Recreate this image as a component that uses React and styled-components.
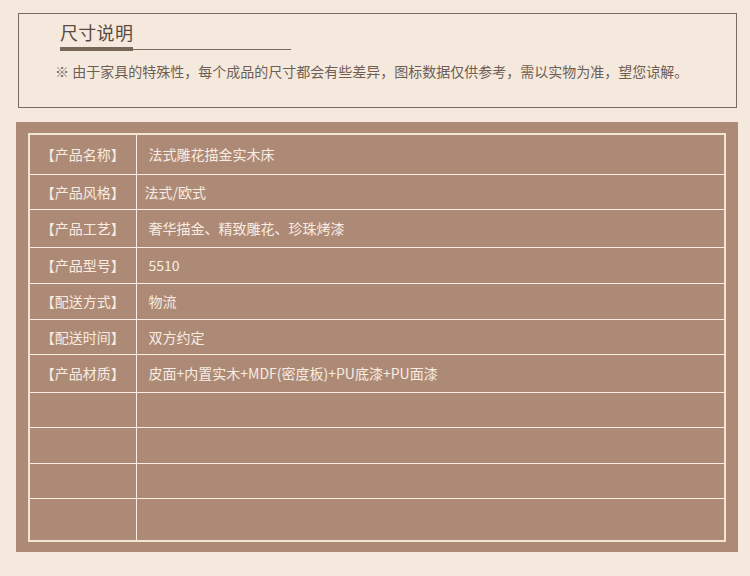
import React from 'react'
import styled, { createGlobalStyle } from 'styled-components'

const GlobalStyle = createGlobalStyle`
  html, body {
    margin: 0;
    padding: 0;
    background: #f5e9de;
  }
  body {
    font-family: "Noto Sans CJK SC", "Noto Sans", sans-serif;
  }
`

const rows = [
  { label: '【产品名称】', value: '法式雕花描金实木床', h: 40 },
  { label: '【产品风格】', value: '法式/欧式', h: 35, tight: true },
  { label: '【产品工艺】', value: '奢华描金、精致雕花、珍珠烤漆', h: 38 },
  { label: '【产品型号】', value: '5510', h: 36 },
  { label: '【配送方式】', value: '物流', h: 36 },
  { label: '【配送时间】', value: '双方约定', h: 35 },
  { label: '【产品材质】', value: '皮面+内置实木+MDF(密度板)+PU底漆+PU面漆', h: 38 },
  { label: '', value: '', h: 35 },
  { label: '', value: '', h: 36 },
  { label: '', value: '', h: 35 },
  { label: '', value: '', h: 43 },
]

const App = () => {
  return (
    <Page>
      <GlobalStyle />
      <NoteBox>
        <Title>尺寸说明</Title>
        <Underline>
          <Bar />
          <Line />
        </Underline>
        <Note>※ 由于家具的特殊性，每个成品的尺寸都会有些差异，图标数据仅供参考，需以实物为准，望您谅解。</Note>
      </NoteBox>
      <Panel>
        <Table>
          <colgroup>
            <col style={{ width: 107 }} />
            <col />
          </colgroup>
          <tbody>
            {rows.map((r, i) => (
              <Row key={i} $h={r.h}>
                <Label>{r.label}</Label>
                <Value $tight={r.tight}>{r.value}</Value>
              </Row>
            ))}
          </tbody>
        </Table>
      </Panel>
    </Page>
  )
}

const Page = styled.div`
  width: 750px;
  height: 576px;
  padding-top: 13px;
  box-sizing: border-box;
  overflow: hidden;
`

const NoteBox = styled.div`
  margin-left: 18px;
  width: 719px;
  height: 95px;
  box-sizing: border-box;
  border: 1px solid #7b6a5d;
  padding: 6px 0 0 41px;
`

const Title = styled.div`
  font-size: 18px;
  line-height: 25px;
  color: #5a4a3f;
  letter-spacing: 0.3px;
`

const Underline = styled.div`
  display: flex;
  align-items: center;
  width: 231px;
  margin-top: 2px;
`

const Bar = styled.div`
  width: 73px;
  height: 4px;
  background: #786759;
`

const Line = styled.div`
  flex: 1;
  height: 1px;
  background: #7b6a5d;
`

const Note = styled.div`
  margin: 10px 0 0 -5px;
  font-size: 14px;
  line-height: 20px;
  color: #6e5e53;
  white-space: nowrap;
`

const Panel = styled.div`
  margin: 14px 0 0 16px;
  width: 722px;
  height: 430px;
  box-sizing: border-box;
  background: #ad8a76;
  padding: 11px 12px 12px 12px;
`

const Table = styled.table`
  width: 698px;
  border-collapse: collapse;
  table-layout: fixed;
  border: 2px solid #f4e4d4;
`

const Row = styled.tr`
  height: ${(p) => p.$h}px;
`

const Cell = styled.td`
  border: 1px solid #fbeee2;
  padding: 0;
  font-size: 14px;
  color: #f8ece1;
  vertical-align: middle;
  white-space: nowrap;
`

const Label = styled(Cell)`
  text-align: center;
`

const Value = styled(Cell)`
  padding-left: ${(p) => (p.$tight ? 8 : 12)}px;
`

export default App
